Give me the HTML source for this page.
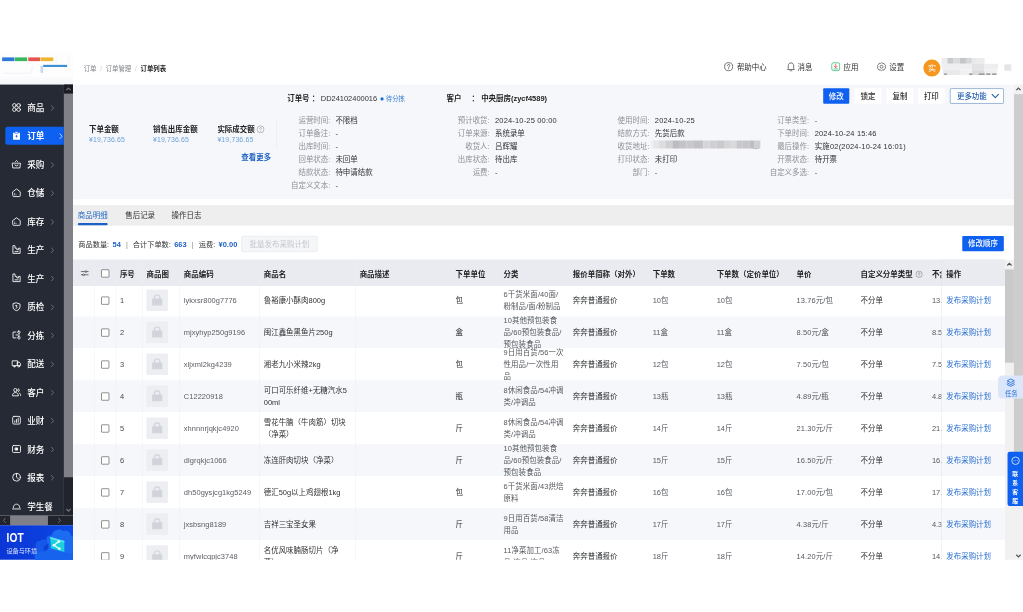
<!DOCTYPE html>
<html lang="zh-CN"><head><meta charset="utf-8"><title>订单列表</title>
<style>
*{box-sizing:border-box;margin:0;padding:0}
html,body{width:1023px;height:612px;background:#fff;overflow:hidden}
body{font-family:"Liberation Sans","Noto Sans CJK SC",sans-serif;color:#303133;position:relative}
#stage{position:absolute;left:0;top:51px;width:1920px;height:955px;transform:scale(0.5328125);transform-origin:0 0;overflow:hidden;background:#fff;font-size:14px;filter:blur(.5px)}
.abs{position:absolute}
/* header */
#hdr{position:absolute;left:0;top:0;width:1920px;height:63px;background:#fff}
#logo{position:absolute;left:0;top:0;width:137px;height:63px;background:#fff;overflow:hidden}
.bc{position:absolute;left:157px;top:22px;font-size:12px;line-height:22px;color:#7e8188;white-space:nowrap}
.bc b{color:#222;font-weight:700}
.bc i{font-style:normal;color:#c8cacf;margin:0 7px}
.hi{position:absolute;top:19px;height:24px;line-height:24px;font-size:14px;color:#303133;white-space:nowrap}
.hi svg{position:absolute;left:-25px;top:1px;width:19px;height:19px}
/* sidebar */
#side{position:absolute;left:0;top:63px;width:120px;height:809px;background:#262a35;overflow:hidden}
.mi{position:absolute;left:0;width:120px;height:34px;line-height:37px;color:#fff;font-size:16px;font-weight:500}
.mi .tx{position:absolute;left:51px;top:0;letter-spacing:0}
.mi svg.ic{position:absolute;left:21px;top:7px}
.mi .ch{position:absolute;left:95px;top:12px}
.mi.act{background:#0e60f0;left:10px;width:110px;border-radius:4px 0 0 4px;font-weight:700}
.mi.act .tx{left:41px}
.mi.act svg.ic{left:11px}
.mi.act .ch{left:101px}
#vsb{position:absolute;left:120px;top:63px;width:17px;height:809px;background:#21242d}
#vsb .th{position:absolute;left:0;top:17px;width:17px;height:720px;background:#7f8088}
#hsb{position:absolute;left:0;top:872px;width:137px;height:18px;background:#21242d}
#hsb .th{position:absolute;left:19px;top:0;width:71px;height:18px;background:#7f8088}
#iot{position:absolute;left:0;top:890px;width:137px;height:67px;background:linear-gradient(90deg,#0a36d6 0%,#0b3fdd 55%,#0d4ae6 100%);overflow:hidden;color:#fff}
/* main */
#panel{position:absolute;left:137px;top:63px;width:1766px;height:215px;background:#f6f7fb}
.lab{position:absolute;width:140px;text-align:right;font-size:14px;line-height:24px;color:#8c9097;white-space:nowrap}
.val{position:absolute;font-size:14px;line-height:24px;color:#303133;white-space:nowrap}
.amt-t{position:absolute;top:167px;font-size:14px;font-weight:700;line-height:22px;color:#222;white-space:nowrap}
.amt-v{position:absolute;top:187px;font-size:13px;line-height:20px;color:#6ba4da;white-space:nowrap;letter-spacing:.25px}
.btn{position:absolute;top:70px;height:29px;line-height:31px;font-size:14px;font-weight:500;text-align:center;background:#fff;color:#303133;white-space:nowrap;border-radius:2px}
#tabs{position:absolute;left:137px;top:289px;width:1766px;height:39px;background:#eeeeee}
.tab{position:absolute;top:0;height:39px;line-height:40px;font-size:14px;color:#303133;white-space:nowrap}
.tab.on{color:#2267c6}
.tab.on:after{content:"";position:absolute;left:0;right:0;bottom:1px;height:4px;background:#1b60c2;border-radius:2px}
#tool{position:absolute;left:147px;top:352px;font-size:13.5px;line-height:22px;color:#303133;white-space:nowrap}
#tool b{color:#1b60c2;font-weight:700;font-size:14px;margin-left:2.5px;letter-spacing:.1px}
#tool i{font-style:normal;color:#888;margin:0 9.5px}
/* table */
#tbl{position:absolute;left:137px;top:391px;width:1749px;height:566px;overflow:hidden;background:#fff}
.th{position:absolute;left:0;top:0;width:1749px;height:50px;background:#e9ebf1;z-index:3;padding-top:3px}
.tr{position:absolute;left:0;width:1749px;height:60px;background:#fff}
.tr.g{background:#f6f7fa}
.c{position:absolute;top:0;height:100%;font-size:14px;color:#45484e;display:flex;align-items:center;line-height:22px;padding:0 8px;overflow:hidden}
.th .c{font-weight:700;color:#222;font-size:14px;padding-top:5px}
.vl{position:absolute;top:0;width:1px;height:566px;background:#eceef2;z-index:4;opacity:.9}
.cb{position:absolute;width:14.5px;height:14.5px;border:1.9px solid #333;border-radius:1.5px;background:#fff;margin:1px}
.img{position:absolute;left:138px;top:10px;width:40px;height:40px;background:#eceef2}
.lk{color:#2a6fd0}
#fix{position:absolute;left:1630px;top:0;width:119px;height:566px;border-left:1px solid #e4e6ea;z-index:5}

.en{letter-spacing:.35px}
</style></head>
<body>
<div id="stage">

<div id="hdr">
 <div class="bc">订单<i>/</i>订单管理<i>/</i><b>订单列表</b></div>
 <div class="hi" style="left:1383px"><svg class="" style="" width="18" height="18" viewBox="0 0 18 18" fill="none"><circle cx="9" cy="9" r="7.200" stroke="#444" stroke-width="1.300"/><path d="M6.800 7.200c0-3 4.400-3 4.400-.2 0 1.600-2.200 1.700-2.200 3.400" stroke="#444" stroke-width="1.300" stroke-linecap="round"/><circle cx="9" cy="12.800" r=".900" fill="#444"/></svg>帮助中心</div>
 <div class="hi" style="left:1497px"><svg class="" style="left:-22px" width="18" height="18" viewBox="0 0 18 18" fill="none"><path d="M4.200 12.500V7.500c0-3.200 2-5.300 4.800-5.300s4.800 2.100 4.800 5.300v5l1.300 1.500H2.900z" stroke="#444" stroke-width="1.300" stroke-linejoin="round"/><path d="M7.300 16.300h3.400" stroke="#444" stroke-width="1.300" stroke-linecap="round"/></svg>消息</div>
 <div class="hi" style="left:1583px"><svg class="" style="left:-24px" width="18" height="18" viewBox="0 0 18 18" fill="none"><rect x="2" y="2" width="14" height="14" rx="3" stroke="#2bb673" stroke-width="1.300"/><path d="M9 4.500v6M6.500 8.300L9 10.800l2.500-2.500" stroke="#e4573d" stroke-width="1.400" stroke-linecap="round" stroke-linejoin="round"/><path d="M5.500 13h7" stroke="#2bb673" stroke-width="1.300" stroke-linecap="round"/></svg>应用</div>
 <div class="hi" style="left:1669px"><svg class="" style="left:-24px" width="18" height="18" viewBox="0 0 18 18" fill="none"><path d="M9 1.800l2 1.400 2.400-.2.900 2.200 2 1.400-.7 2.400.7 2.400-2 1.400-.900 2.200-2.400-.2-2 1.400-2-1.400-2.400.2-.900-2.200-2-1.400.7-2.400-.7-2.400 2-1.400.900-2.200 2.400.2z" stroke="#444" stroke-width="1.200" stroke-linejoin="round"/><circle cx="9" cy="9" r="2.600" stroke="#444" stroke-width="1.200"/></svg>设置</div>
 <div class="abs" style="left:1733px;top:16px;width:32px;height:32px;border-radius:50%;background:#f5961e;color:#fff;font-size:15px;line-height:32px;text-align:center">实</div>
<div class="abs" style="left:0;top:0;filter:blur(1.200px)"><div class="abs" style="left:1767.3px;top:13.2px;width:10.4px;height:10.8px;background:#ececee"></div><div class="abs" style="left:1777.7px;top:13.2px;width:11.3px;height:10.8px;background:#c9cace"></div><div class="abs" style="left:1789.1px;top:13.2px;width:12.3px;height:10.8px;background:#dadbde"></div><div class="abs" style="left:1801.3px;top:13.2px;width:11.3px;height:10.8px;background:#c5c6ca"></div><div class="abs" style="left:1812.7px;top:13.2px;width:11.3px;height:10.8px;background:#d5d6d9"></div><div class="abs" style="left:1824.0px;top:13.2px;width:11.3px;height:10.8px;background:#e9e9eb"></div><div class="abs" style="left:1835.4px;top:13.2px;width:12.3px;height:10.8px;background:#ececee"></div><div class="abs" style="left:1767.3px;top:24.0px;width:56.7px;height:11.0px;background:#efeff1"></div><div class="abs" style="left:1824.0px;top:24.0px;width:23.6px;height:11.0px;background:#e3e3e6"></div><div class="abs" style="left:1847.7px;top:24.0px;width:25.5px;height:11.0px;background:#eeeef0"></div><div class="abs" style="left:1770.2px;top:35.0px;width:32.1px;height:10.4px;background:#e9e9eb"></div><div class="abs" style="left:1802.3px;top:35.0px;width:21.7px;height:10.4px;background:#f1f1f2"></div><div class="abs" style="left:1824.0px;top:35.0px;width:23.6px;height:10.4px;background:#dddde0"></div><div class="abs" style="left:1847.7px;top:35.0px;width:24.6px;height:10.4px;background:#f0f0f1"></div><div class="abs" style="left:1771.7px;top:42.4px;width:5.7px;height:2.5px;background:#9a9a9e"></div><div class="abs" style="left:1818.9px;top:42.4px;width:6.0px;height:2.5px;background:#9a9a9e"></div><div class="abs" style="left:1837.3px;top:42.4px;width:10.4px;height:2.5px;background:#9a9a9e"></div><div class="abs" style="left:1850.5px;top:42.4px;width:8.5px;height:2.5px;background:#9a9a9e"></div><div class="abs" style="left:1861.8px;top:42.4px;width:8.5px;height:2.5px;background:#9a9a9e"></div><div class="abs" style="left:1884.5px;top:24.6px;width:13.2px;height:12.3px;background:#e5e5e7"></div></div>
</div>
<div id="logo">
  <div class="abs" style="left:0;top:0;width:137px;height:46px;background:#fdfdfe"></div>
  <div class="abs" style="left:4px;top:11.500px;width:22.500px;height:7px;background:#2f78d8"></div>
  <div class="abs" style="left:28px;top:11.500px;width:22.500px;height:7px;background:#38b85c"></div>
  <div class="abs" style="left:52.500px;top:11.500px;width:22.500px;height:7px;background:#e5554e"></div>
  <div class="abs" style="left:75.500px;top:11.500px;width:24px;height:7px;background:#f0b530"></div>
  <div class="abs" style="left:80.500px;top:26px;width:45px;height:3.500px;background:#3d8fd1"></div>
  <div class="abs" style="left:76px;top:28px;width:5px;height:13px;background:#c4d8ee"></div>
  <div class="abs" style="left:6px;top:41px;width:51px;height:1px;background:#e3e6ea"></div>
  <div class="abs" style="left:58.500px;top:27px;width:1px;height:15px;background:#e9ebee;transform:rotate(14deg)"></div>
  <div class="abs" style="left:105px;top:9px;width:1px;height:12px;background:#eceef1"></div>
  <div class="abs" style="left:129px;top:8px;width:1px;height:22px;background:#eceef1"></div>
  <div class="abs" style="left:0;top:46px;width:137px;height:17px;background:linear-gradient(#fdfdfe,#f3f5f8)"></div>
</div>

<div id="side"><div class="mi" style="top:25.9px"><svg class="ic" style="" width="20" height="20" viewBox="0 0 20 20" fill="none"><g stroke="#fff" stroke-width="1.6" stroke-linecap="round" stroke-linejoin="round"><circle cx="6" cy="6" r="3.4"/><circle cx="14" cy="6" r="3.4"/><circle cx="6" cy="14" r="3.4"/><circle cx="14" cy="14" r="3.4"/></g></svg><span class="tx">商品</span><svg class="ch" style="" width="7" height="12" viewBox="0 0 7 12" fill="none"><path d="M1.500 1.500l4 4.500-4 4.500" stroke="#7f838d" stroke-width="1.400" stroke-linecap="round" stroke-linejoin="round"/></svg></div><div class="mi act" style="top:79.3px"><svg class="ic" style="" width="20" height="20" viewBox="0 0 20 20" fill="none"><path d="M3.5 4.5h13v13h-13z" fill="#fff"/><path d="M7 2.5h6v3.2H7z" fill="#fff" stroke="#0e60f0" stroke-width="1"/><path d="M10 8.5v5M8 11h4" stroke="#0e60f0" stroke-width="1.5"/></svg><span class="tx">订单</span><svg class="ch" style="" width="7" height="12" viewBox="0 0 7 12" fill="none"><path d="M1.500 1.500l4 4.500-4 4.500" stroke="#fff" stroke-width="1.400" stroke-linecap="round" stroke-linejoin="round"/></svg></div><div class="mi" style="top:132.7px"><svg class="ic" style="" width="20" height="20" viewBox="0 0 20 20" fill="none"><g stroke="#fff" stroke-width="1.6" stroke-linecap="round" stroke-linejoin="round"><path d="M2.5 7.5h15l-1.2 9H3.7z"/><path d="M7 10.5c0 3 6 3 6 0"/><path d="M8 4.5l2-2 2 2"/></g></svg><span class="tx">采购</span><svg class="ch" style="" width="7" height="12" viewBox="0 0 7 12" fill="none"><path d="M1.500 1.500l4 4.500-4 4.500" stroke="#7f838d" stroke-width="1.400" stroke-linecap="round" stroke-linejoin="round"/></svg></div><div class="mi" style="top:186.1px"><svg class="ic" style="" width="20" height="20" viewBox="0 0 20 20" fill="none"><g stroke="#fff" stroke-width="1.6" stroke-linecap="round" stroke-linejoin="round"><path d="M3 8.2L10 3l7 5.2V16a1.2 1.2 0 0 1-1.2 1.2H4.2A1.2 1.2 0 0 1 3 16z"/><path d="M6.5 13.8h.1M9 13.8h.1M6.5 11.2h.1"/></g></svg><span class="tx">仓储</span><svg class="ch" style="" width="7" height="12" viewBox="0 0 7 12" fill="none"><path d="M1.500 1.500l4 4.500-4 4.500" stroke="#7f838d" stroke-width="1.400" stroke-linecap="round" stroke-linejoin="round"/></svg></div><div class="mi" style="top:239.5px"><svg class="ic" style="" width="20" height="20" viewBox="0 0 20 20" fill="none"><g stroke="#fff" stroke-width="1.6" stroke-linecap="round" stroke-linejoin="round"><path d="M3 8.2L10 3l7 5.2V16a1.2 1.2 0 0 1-1.2 1.2H4.2A1.2 1.2 0 0 1 3 16z"/><path d="M6.5 13.8h.1M9 13.8h.1M6.5 11.2h.1"/></g></svg><span class="tx">库存</span><svg class="ch" style="" width="7" height="12" viewBox="0 0 7 12" fill="none"><path d="M1.500 1.500l4 4.500-4 4.500" stroke="#7f838d" stroke-width="1.400" stroke-linecap="round" stroke-linejoin="round"/></svg></div><div class="mi" style="top:292.9px"><svg class="ic" style="" width="20" height="20" viewBox="0 0 20 20" fill="none"><g stroke="#fff" stroke-width="1.6" stroke-linecap="round" stroke-linejoin="round"><path d="M3.200 3.200v13.600h13.600V7h-3v3h-3.200V7h-3.400V3.200z"/><path d="M7 13.500h6"/></g></svg><span class="tx">生产</span><svg class="ch" style="" width="7" height="12" viewBox="0 0 7 12" fill="none"><path d="M1.500 1.500l4 4.500-4 4.500" stroke="#7f838d" stroke-width="1.400" stroke-linecap="round" stroke-linejoin="round"/></svg></div><div class="mi" style="top:346.3px"><svg class="ic" style="" width="20" height="20" viewBox="0 0 20 20" fill="none"><g stroke="#fff" stroke-width="1.6" stroke-linecap="round" stroke-linejoin="round"><path d="M3.200 3.200v13.600h13.600V7h-3v3h-3.200V7h-3.400V3.200z"/><path d="M7 13.500h6"/></g></svg><span class="tx">生产</span><svg class="ch" style="" width="7" height="12" viewBox="0 0 7 12" fill="none"><path d="M1.500 1.500l4 4.500-4 4.500" stroke="#7f838d" stroke-width="1.400" stroke-linecap="round" stroke-linejoin="round"/></svg></div><div class="mi" style="top:399.7px"><svg class="ic" style="" width="20" height="20" viewBox="0 0 20 20" fill="none"><g stroke="#fff" stroke-width="1.6" stroke-linecap="round" stroke-linejoin="round"><path d="M10 2.8l6.5 2v5.4c0 3.6-2.6 6-6.5 7.2-3.900-1.2-6.500-3.600-6.500-7.200V4.800z"/><path d="M8.400 7.500h2.400l-1.400 2.200c2.400 0 2.400 3-.2 3"/></g></svg><span class="tx">质检</span><svg class="ch" style="" width="7" height="12" viewBox="0 0 7 12" fill="none"><path d="M1.500 1.500l4 4.500-4 4.500" stroke="#7f838d" stroke-width="1.400" stroke-linecap="round" stroke-linejoin="round"/></svg></div><div class="mi" style="top:453.1px"><svg class="ic" style="" width="20" height="20" viewBox="0 0 20 20" fill="none"><g stroke="#fff" stroke-width="1.6" stroke-linecap="round" stroke-linejoin="round"><path d="M9 4.500H3.500v11H9"/><path d="M9 10h3"/><rect x="12.500" y="2.800" width="4" height="4" rx="1"/><rect x="12.500" y="13.200" width="4" height="4" rx="1"/><path d="M14.500 8.500v3"/></g></svg><span class="tx">分拣</span><svg class="ch" style="" width="7" height="12" viewBox="0 0 7 12" fill="none"><path d="M1.500 1.500l4 4.500-4 4.500" stroke="#7f838d" stroke-width="1.400" stroke-linecap="round" stroke-linejoin="round"/></svg></div><div class="mi" style="top:506.5px"><svg class="ic" style="" width="20" height="20" viewBox="0 0 20 20" fill="none"><g stroke="#fff" stroke-width="1.6" stroke-linecap="round" stroke-linejoin="round"><path d="M2.500 4.500h9.500v9h-9.500z"/><path d="M12 7h3.200l2.300 2.800v3.700H12z"/><circle cx="6" cy="15" r="1.300" fill="#262a35"/><circle cx="14.300" cy="15" r="1.300" fill="#262a35"/></g></svg><span class="tx">配送</span><svg class="ch" style="" width="7" height="12" viewBox="0 0 7 12" fill="none"><path d="M1.500 1.500l4 4.500-4 4.500" stroke="#7f838d" stroke-width="1.400" stroke-linecap="round" stroke-linejoin="round"/></svg></div><div class="mi" style="top:559.9px"><svg class="ic" style="" width="20" height="20" viewBox="0 0 20 20" fill="none"><g stroke="#fff" stroke-width="1.6" stroke-linecap="round" stroke-linejoin="round"><circle cx="8" cy="6.500" r="3.200"/><path d="M2.500 16.500c0-3.600 2.400-5.400 5.500-5.400s5.500 1.800 5.500 5.400z"/><path d="M13.500 4c2.600.400 2.600 4.600 0 5.200M15 11.800c1.800.700 2.700 2.300 2.700 4.700"/></g></svg><span class="tx">客户</span><svg class="ch" style="" width="7" height="12" viewBox="0 0 7 12" fill="none"><path d="M1.500 1.500l4 4.500-4 4.500" stroke="#7f838d" stroke-width="1.400" stroke-linecap="round" stroke-linejoin="round"/></svg></div><div class="mi" style="top:613.3px"><svg class="ic" style="" width="20" height="20" viewBox="0 0 20 20" fill="none"><g stroke="#fff" stroke-width="1.6" stroke-linecap="round" stroke-linejoin="round"><rect x="2.800" y="2.800" width="14.400" height="14.400" rx="2.400"/><path d="M6.800 14v-3M10 14V8.500M13.200 14V6"/></g></svg><span class="tx">业财</span><svg class="ch" style="" width="7" height="12" viewBox="0 0 7 12" fill="none"><path d="M1.500 1.500l4 4.500-4 4.500" stroke="#7f838d" stroke-width="1.400" stroke-linecap="round" stroke-linejoin="round"/></svg></div><div class="mi" style="top:666.7px"><svg class="ic" style="" width="20" height="20" viewBox="0 0 20 20" fill="none"><g stroke="#fff" stroke-width="1.6" stroke-linecap="round" stroke-linejoin="round"><rect x="2.500" y="3.500" width="15" height="13" rx="1.800"/><rect x="8" y="8" width="4" height="4" fill="#fff"/></g></svg><span class="tx">财务</span><svg class="ch" style="" width="7" height="12" viewBox="0 0 7 12" fill="none"><path d="M1.500 1.500l4 4.500-4 4.500" stroke="#7f838d" stroke-width="1.400" stroke-linecap="round" stroke-linejoin="round"/></svg></div><div class="mi" style="top:720.1px"><svg class="ic" style="" width="20" height="20" viewBox="0 0 20 20" fill="none"><g stroke="#fff" stroke-width="1.6" stroke-linecap="round" stroke-linejoin="round"><circle cx="10" cy="10" r="7.200"/><path d="M10 2.800V10l4.600 4"/></g></svg><span class="tx">报表</span><svg class="ch" style="" width="7" height="12" viewBox="0 0 7 12" fill="none"><path d="M1.500 1.500l4 4.500-4 4.500" stroke="#7f838d" stroke-width="1.400" stroke-linecap="round" stroke-linejoin="round"/></svg></div><div class="mi" style="top:773.5px"><svg class="ic" style="" width="20" height="20" viewBox="0 0 20 20" fill="none"><g stroke="#fff" stroke-width="1.6" stroke-linecap="round" stroke-linejoin="round" stroke-width="2"><path d="M2.500 15.500h15"/><path d="M4 13c0-4 2.700-6.500 6-6.500s6 2.500 6 6.500"/></g></svg><span class="tx">学生餐</span></div></div>

<div id="vsb"><div class="abs" style="left:0;top:0;width:17px;height:17px;background:#1a1c22"><svg class="" style="" width="17" height="17" viewBox="0 0 17 17" fill="none"><path d="M4.500 10.500l4-4 4 4" stroke="#70727a" stroke-width="2.400" fill="none"/></svg></div><div class="th"></div><div class="abs" style="left:0;top:790px"><svg class="" style="" width="17" height="17" viewBox="0 0 17 17" fill="none"><path d="M4.500 6.500l4 4 4-4" stroke="#70727a" stroke-width="2.400" fill="none"/></svg></div></div>
<div id="hsb"><div class="th"></div>
 <svg class="abs" style="left:0;top:0" width="17" height="18" viewBox="0 0 17 18" fill="none"><path d="M10.500 4.500l-4 4.500 4 4.500" stroke="#70727a" stroke-width="1.800" fill="none"/></svg>
 <svg class="abs" style="left:103px;top:0" width="17" height="18" viewBox="0 0 17 18" fill="none"><path d="M6.500 4.500l4 4.500-4 4.500" stroke="#70727a" stroke-width="1.800" fill="none"/></svg>
</div>


<div id="iot">
 <svg class="abs" style="left:57px;top:0" width="80" height="67" viewBox="0 0 80 67" fill="none"><path d="M31 67V31c-3-8 3-13 9-11 1-10 14-16 22-9 6-3 13 1 14 8 4 1 6 5 4 9v39z" fill="#1c6cf2"/><path d="M10 67V36c0-4 4-7 8-6 3-4 10-4 12 0 2 1 3 3 3 6v31z" fill="#1659e9"/><path d="M25 40l9-6v10l-9 6z" fill="#0c41d6"/><path d="M8 52l30-6 42 8v13H8z" fill="#1763ee"/><path d="M37.300 22.200l26.400 7.400v20.800l-25.100-7.300z" fill="#1bd2dc"/><path d="M37.300 22.200l26.400 7.400v3l-26.400-7.400z" fill="#5fe6ea"/><path d="M53.300 30.800l-9.200 6.700 10.400 6.800" stroke="#effffe" stroke-width="2.400" fill="none" stroke-linejoin="round"/><circle cx="53.300" cy="30.800" r="2.400" fill="#effffe"/><circle cx="44.100" cy="37.500" r="2.400" fill="#effffe"/><circle cx="54.500" cy="44.300" r="2.400" fill="#effffe"/></svg>
 <div class="abs" style="left:12px;top:9px;font-size:23px;font-weight:700;line-height:30px;letter-spacing:.5px;transform:scaleX(.83);transform-origin:0 0">IOT</div>
 <div class="abs" style="left:12px;top:41px;font-size:11.500px;line-height:16px;color:#dfe8ff;white-space:nowrap">设备与环境</div>
</div>


<div id="panel"></div>
<div class="amt-t" style="left:167px;top:136px">下单金额</div><div class="amt-v" style="left:167px;top:156px">¥19,736.65</div>
<div class="amt-t" style="left:287px;top:136px">销售出库金额</div><div class="amt-v" style="left:287px;top:156px">¥19,736.65</div>
<div class="amt-t" style="left:408px;top:136px">实际成交额</div><div class="amt-v" style="left:408px;top:156px">¥19,736.65</div>
<svg class="abs" style="left:481px;top:139px" width="16" height="16" viewBox="0 0 16 16" fill="none"><circle cx="8" cy="8" r="6.500" stroke="#8c9097" stroke-width="1.100"/><path d="M6.200 6.500c0-2.500 3.600-2.500 3.600-.1 0 1.300-1.800 1.400-1.800 2.800" stroke="#8c9097" stroke-width="1.100" stroke-linecap="round"/><circle cx="8" cy="11.400" r=".750" fill="#8c9097"/></svg>
<div class="abs" style="left:453px;top:188.500px;font-size:14px;font-weight:700;line-height:22px;color:#1b60c2;white-space:nowrap">查看更多</div>
<div class="abs" style="left:518px;top:128px;width:1px;height:55px;background:#e3e6eb"></div>
<div class="abs" style="left:539px;top:78px;font-size:14px;font-weight:700;line-height:22px;color:#222;white-space:nowrap">订单号</div>
<div class="abs" style="left:585px;top:78px;font-size:14px;font-weight:700;line-height:22px;color:#222">：</div>
<div class="abs" style="left:602px;top:78px;font-size:14px;line-height:22px;color:#303133;white-space:nowrap">DD24102400016</div>
<div class="abs" style="left:714px;top:87px;width:6px;height:6px;border-radius:50%;background:#1a6bd6"></div>
<div class="abs" style="left:724px;top:78px;font-size:12px;line-height:22px;color:#3f83d6;white-space:nowrap">待分拣</div>
<div class="abs" style="left:838px;top:78px;font-size:14px;font-weight:700;line-height:22px;color:#222;white-space:nowrap">客户</div>
<div class="abs" style="left:885px;top:78px;font-size:14px;font-weight:700;line-height:22px;color:#222">：</div>
<div class="abs" style="left:903px;top:78px;font-size:14px;font-weight:700;line-height:22px;color:#222;white-space:nowrap">中央厨房(zycf4589)</div>
<div class="lab" style="left:480.0px;top:118.0px">运营时间:</div><div class="val" style="left:629.5px;top:118.0px">不限档</div><div class="lab" style="left:480.0px;top:142.2px">订单备注:</div><div class="val" style="left:629.5px;top:142.2px">-</div><div class="lab" style="left:480.0px;top:166.3px">出库时间:</div><div class="val" style="left:629.5px;top:166.3px">-</div><div class="lab" style="left:480.0px;top:191.6px">回单状态:</div><div class="val" style="left:629.5px;top:191.6px">未回单</div><div class="lab" style="left:480.0px;top:214.8px">结款状态:</div><div class="val" style="left:629.5px;top:214.8px">待申请结款</div><div class="lab" style="left:480.0px;top:239.6px">自定义文本:</div><div class="val" style="left:629.5px;top:239.6px">-</div><div class="lab" style="left:779.0px;top:118.0px">预计收货:</div><div class="val en" style="left:929.0px;top:118.0px">2024-10-25 00:00</div><div class="lab" style="left:779.0px;top:142.2px">订单来源:</div><div class="val" style="left:929.0px;top:142.2px">系统录单</div><div class="lab" style="left:779.0px;top:166.3px">收货人:</div><div class="val" style="left:929.0px;top:166.3px">吕辉耀</div><div class="lab" style="left:779.0px;top:191.6px">出库状态:</div><div class="val" style="left:929.0px;top:191.6px">待出库</div><div class="lab" style="left:779.0px;top:214.8px">运费:</div><div class="val" style="left:929.0px;top:214.8px">-</div><div class="lab" style="left:1079.0px;top:118.0px">使用时间:</div><div class="val en" style="left:1229.0px;top:118.0px">2024-10-25</div><div class="lab" style="left:1079.0px;top:142.2px">结款方式:</div><div class="val" style="left:1229.0px;top:142.2px">先货后款</div><div class="lab" style="left:1079.0px;top:166.3px">收货地址:</div><div class="val" style="left:1229.0px;top:166.3px"></div><div class="lab" style="left:1079.0px;top:191.6px">打印状态:</div><div class="val" style="left:1229.0px;top:191.6px">未打印</div><div class="lab" style="left:1079.0px;top:214.8px">部门:</div><div class="val" style="left:1229.0px;top:214.8px">-</div><div class="lab" style="left:1378.5px;top:118.0px">订单类型:</div><div class="val" style="left:1529.0px;top:118.0px">-</div><div class="lab" style="left:1378.5px;top:142.2px">下单时间:</div><div class="val en" style="left:1529.0px;top:142.2px">2024-10-24 15:46</div><div class="lab" style="left:1378.5px;top:166.3px">最后操作:</div><div class="val en" style="left:1529.0px;top:166.3px">实施02(2024-10-24 16:01)</div><div class="lab" style="left:1378.5px;top:191.6px">开票状态:</div><div class="val" style="left:1529.0px;top:191.6px">待开票</div><div class="lab" style="left:1378.5px;top:214.8px">自定义多选:</div><div class="val" style="left:1529.0px;top:214.8px">-</div>
<div class="abs" style="left:0;top:0;filter:blur(1.200px)"><div class="abs" style="left:1220.9px;top:168.1px;width:5.5px;height:14.9px;background:#eff0f2"></div><div class="abs" style="left:1226.4px;top:168.1px;width:11.0px;height:14.9px;background:#e6e6e8"></div><div class="abs" style="left:1237.4px;top:168.1px;width:12.4px;height:14.9px;background:#dcdcde"></div><div class="abs" style="left:1249.8px;top:168.1px;width:12.4px;height:14.9px;background:#d0d0d3"></div><div class="abs" style="left:1262.2px;top:168.1px;width:13.8px;height:14.9px;background:#bcbcc0"></div><div class="abs" style="left:1276.0px;top:168.1px;width:12.4px;height:14.9px;background:#c4c4c7"></div><div class="abs" style="left:1288.4px;top:168.1px;width:12.4px;height:14.9px;background:#c9c9cc"></div><div class="abs" style="left:1300.7px;top:168.1px;width:19.3px;height:14.9px;background:#c2c2c6"></div><div class="abs" style="left:1320.0px;top:168.1px;width:12.4px;height:14.9px;background:#d6d6d9"></div><div class="abs" style="left:1332.4px;top:168.1px;width:12.4px;height:14.9px;background:#d0d0d3"></div><div class="abs" style="left:1344.8px;top:168.1px;width:13.8px;height:14.9px;background:#cacacd"></div><div class="abs" style="left:1358.5px;top:168.1px;width:11.0px;height:14.9px;background:#d4d4d7"></div><div class="abs" style="left:1369.5px;top:168.1px;width:12.4px;height:14.9px;background:#d9d9dc"></div><div class="abs" style="left:1381.9px;top:168.1px;width:12.4px;height:14.9px;background:#c8c8cb"></div><div class="abs" style="left:1394.3px;top:168.1px;width:12.4px;height:14.9px;background:#c6c6c9"></div><div class="abs" style="left:1406.7px;top:168.1px;width:9.6px;height:14.9px;background:#bdbdc1"></div><div class="abs" style="left:1416.3px;top:168.1px;width:11.0px;height:14.9px;background:#cfcfd2"></div><div class="abs" style="left:1413.0px;top:182.7px;width:10.5px;height:1.7px;background:#a0a0a4"></div></div>
<div class="btn" style="left:1545px;width:49px;background:#0e60f0;color:#fff">修改</div>
<div class="btn" style="left:1604px;width:50px">锁定</div>
<div class="btn" style="left:1664px;width:50px">复制</div>
<div class="btn" style="left:1723px;width:50px">打印</div>
<div class="btn" style="left:1783px;width:101px;border:1.500px solid #4a7fb8;color:#2461ae;line-height:28px;text-align:left;padding-left:12px;font-size:14px">更多功能<svg class="abs" style="left:76px;top:8px" width="16" height="12" viewBox="0 0 16 12" fill="none"><path d="M2 2.500l6 6 6-6" stroke="#1f5fae" stroke-width="2" stroke-linecap="round" stroke-linejoin="round"/></svg></div>


<div id="tabs">
 <div class="tab on" style="left:9px">商品明细</div>
 <div class="tab" style="left:98px">售后记录</div>
 <div class="tab" style="left:185px">操作日志</div>
</div>
<div id="tool">商品数量: <b>54</b><i>|</i>合计下单数: <b>663</b><i>|</i>运费: <b>¥0.00</b></div>
<div class="abs" style="left:453px;top:347px;width:143px;height:30px;line-height:28px;border:1px solid #e1e4ea;border-radius:3px;background:#f5f6f8;color:#c3c6cd;font-size:14px;text-align:center;white-space:nowrap">批量发布采购计划</div>
<div class="abs" style="left:1806px;top:347px;width:78px;height:29px;line-height:29px;border-radius:2px;background:#0e60f0;color:#fff;font-size:14px;font-weight:500;text-align:center;white-space:nowrap">修改顺序</div>

<div id="tbl"><div class="th"><svg class="abs" style="left:14px;top:18px" width="16" height="16" viewBox="0 0 16 16" fill="none"><path d="M1.500 5h7M12 5h2.500M1.500 11h2.500M7.500 11h7" stroke="#444" stroke-width="1.400" stroke-linecap="round"/><circle cx="10.200" cy="5" r="1.700" stroke="#444" stroke-width="1.200"/><circle cx="5.800" cy="11" r="1.700" stroke="#444" stroke-width="1.200"/></svg><div class="cb" style="left:52px;top:18px"></div><div class="c" style="left:80px;width:50px">序号</div><div class="c" style="left:130px;width:70px">商品图</div><div class="c" style="left:200px;width:150px">商品编码</div><div class="c" style="left:350px;width:180px">商品名</div><div class="c" style="left:530px;width:180px">商品描述</div><div class="c" style="left:710px;width:90px">下单单位</div><div class="c" style="left:800px;width:130px">分类</div><div class="c" style="left:930px;width:150px">报价单简称（对外）</div><div class="c" style="left:1080px;width:120px">下单数</div><div class="c" style="left:1200px;width:150px">下单数（定价单位）</div><div class="c" style="left:1350px;width:120px">单价</div><div class="c" style="left:1470px;width:134px">自定义分单类型<svg class="" style="margin-left:5px;flex:none" width="14" height="14" viewBox="0 0 14 14" fill="none"><circle cx="7" cy="7" r="5.900" stroke="#777b82" stroke-width="1.100"/><path d="M5.400 5.700c0-2.200 3.200-2.200 3.200-.1 0 1.200-1.600 1.200-1.600 2.500" stroke="#777b82" stroke-width="1.100" stroke-linecap="round"/><circle cx="7" cy="10" r=".750" fill="#777b82"/></svg></div><div class="c" style="left:1604px;width:120px">不含税</div></div><div class="tr" style="top:47px"><div class="cb" style="left:52px;top:22px"></div><div class="c" style="left:80px;width:50px;">1</div><svg class="img" style="" width="40" height="40" viewBox="0 0 40 40" fill="none"><rect width="40" height="40" fill="#eceef2"/><path d="M14.800 17.500v-2.300a5.200 5.200 0 0 1 10.400 0V17.500" stroke="#d1d4da" stroke-width="2.200"/><rect x="10.500" y="16.500" width="19" height="13" rx="1" fill="#d1d4da"/></svg><div class="c" style="left:200px;width:150px;color:#5a5d63;letter-spacing:.1px">lykxsr800g7776</div><div class="c" style="left:350px;width:180px;color:#303133">鲁裕康小酥肉800g</div><div class="c" style="left:710px;width:90px;color:#2b2d30">包</div><div class="c" style="left:800px;width:130px;color:#55585e;letter-spacing:.15px">6干货米面/40面/<br>粉制品/面/粉制品</div><div class="c" style="left:930px;width:150px;color:#2b2d30">奔奔普通报价</div><div class="c" style="left:1080px;width:120px;color:#55585e">10包</div><div class="c" style="left:1200px;width:150px;color:#55585e">10包</div><div class="c" style="left:1350px;width:120px;color:#55585e;letter-spacing:.2px">13.76元/包</div><div class="c" style="left:1470px;width:134px;color:#2b2d30">不分单</div><div class="c" style="left:1604px;width:120px;color:#55585e">13.</div></div><div class="tr g" style="top:107px"><div class="cb" style="left:52px;top:22px"></div><div class="c" style="left:80px;width:50px;">2</div><svg class="img" style="" width="40" height="40" viewBox="0 0 40 40" fill="none"><rect width="40" height="40" fill="#eceef2"/><path d="M14.800 17.500v-2.300a5.200 5.200 0 0 1 10.400 0V17.500" stroke="#d1d4da" stroke-width="2.200"/><rect x="10.500" y="16.500" width="19" height="13" rx="1" fill="#d1d4da"/></svg><div class="c" style="left:200px;width:150px;color:#5a5d63;letter-spacing:.1px">mjxyhyp250g9196</div><div class="c" style="left:350px;width:180px;color:#303133">闽江鑫鱼黑鱼片250g</div><div class="c" style="left:710px;width:90px;color:#2b2d30">盒</div><div class="c" style="left:800px;width:130px;color:#55585e;letter-spacing:.15px">10其他预包装食<br>品/60预包装食品/<br>预包装食品</div><div class="c" style="left:930px;width:150px;color:#2b2d30">奔奔普通报价</div><div class="c" style="left:1080px;width:120px;color:#55585e">11盒</div><div class="c" style="left:1200px;width:150px;color:#55585e">11盒</div><div class="c" style="left:1350px;width:120px;color:#55585e;letter-spacing:.2px">8.50元/盒</div><div class="c" style="left:1470px;width:134px;color:#2b2d30">不分单</div><div class="c" style="left:1604px;width:120px;color:#55585e">8.5</div></div><div class="tr" style="top:167px"><div class="cb" style="left:52px;top:22px"></div><div class="c" style="left:80px;width:50px;">3</div><svg class="img" style="" width="40" height="40" viewBox="0 0 40 40" fill="none"><rect width="40" height="40" fill="#eceef2"/><path d="M14.800 17.500v-2.300a5.200 5.200 0 0 1 10.400 0V17.500" stroke="#d1d4da" stroke-width="2.200"/><rect x="10.500" y="16.500" width="19" height="13" rx="1" fill="#d1d4da"/></svg><div class="c" style="left:200px;width:150px;color:#5a5d63;letter-spacing:.1px">xljxml2kg4239</div><div class="c" style="left:350px;width:180px;color:#303133">湘老九小米辣2kg</div><div class="c" style="left:710px;width:90px;color:#2b2d30">包</div><div class="c" style="left:800px;width:130px;color:#55585e;letter-spacing:.15px">9日用百货/56一次<br>性用品/一次性用<br>品</div><div class="c" style="left:930px;width:150px;color:#2b2d30">奔奔普通报价</div><div class="c" style="left:1080px;width:120px;color:#55585e">12包</div><div class="c" style="left:1200px;width:150px;color:#55585e">12包</div><div class="c" style="left:1350px;width:120px;color:#55585e;letter-spacing:.2px">7.50元/包</div><div class="c" style="left:1470px;width:134px;color:#2b2d30">不分单</div><div class="c" style="left:1604px;width:120px;color:#55585e">7.5</div></div><div class="tr g" style="top:227px"><div class="cb" style="left:52px;top:22px"></div><div class="c" style="left:80px;width:50px;">4</div><svg class="img" style="" width="40" height="40" viewBox="0 0 40 40" fill="none"><rect width="40" height="40" fill="#eceef2"/><path d="M14.800 17.500v-2.300a5.200 5.200 0 0 1 10.400 0V17.500" stroke="#d1d4da" stroke-width="2.200"/><rect x="10.500" y="16.500" width="19" height="13" rx="1" fill="#d1d4da"/></svg><div class="c" style="left:200px;width:150px;color:#5a5d63;letter-spacing:.1px">C12220918</div><div class="c" style="left:350px;width:180px;color:#303133">可口可乐纤维+无糖汽水5<br>00ml</div><div class="c" style="left:710px;width:90px;color:#2b2d30">瓶</div><div class="c" style="left:800px;width:130px;color:#55585e;letter-spacing:.15px">8休闲食品/54冲调<br>类/冲调品</div><div class="c" style="left:930px;width:150px;color:#2b2d30">奔奔普通报价</div><div class="c" style="left:1080px;width:120px;color:#55585e">13瓶</div><div class="c" style="left:1200px;width:150px;color:#55585e">13瓶</div><div class="c" style="left:1350px;width:120px;color:#55585e;letter-spacing:.2px">4.89元/瓶</div><div class="c" style="left:1470px;width:134px;color:#2b2d30">不分单</div><div class="c" style="left:1604px;width:120px;color:#55585e">4.8</div></div><div class="tr" style="top:287px"><div class="cb" style="left:52px;top:22px"></div><div class="c" style="left:80px;width:50px;">5</div><svg class="img" style="" width="40" height="40" viewBox="0 0 40 40" fill="none"><rect width="40" height="40" fill="#eceef2"/><path d="M14.800 17.500v-2.300a5.200 5.200 0 0 1 10.400 0V17.500" stroke="#d1d4da" stroke-width="2.200"/><rect x="10.500" y="16.500" width="19" height="13" rx="1" fill="#d1d4da"/></svg><div class="c" style="left:200px;width:150px;color:#5a5d63;letter-spacing:.1px">xhnnnrjqkjc4920</div><div class="c" style="left:350px;width:180px;color:#303133">雪花牛腩（牛肉筋）切块<br>（净菜）</div><div class="c" style="left:710px;width:90px;color:#2b2d30">斤</div><div class="c" style="left:800px;width:130px;color:#55585e;letter-spacing:.15px">8休闲食品/54冲调<br>类/冲调品</div><div class="c" style="left:930px;width:150px;color:#2b2d30">奔奔普通报价</div><div class="c" style="left:1080px;width:120px;color:#55585e">14斤</div><div class="c" style="left:1200px;width:150px;color:#55585e">14斤</div><div class="c" style="left:1350px;width:120px;color:#55585e;letter-spacing:.2px">21.30元/斤</div><div class="c" style="left:1470px;width:134px;color:#2b2d30">不分单</div><div class="c" style="left:1604px;width:120px;color:#55585e">21.</div></div><div class="tr g" style="top:347px"><div class="cb" style="left:52px;top:22px"></div><div class="c" style="left:80px;width:50px;">6</div><svg class="img" style="" width="40" height="40" viewBox="0 0 40 40" fill="none"><rect width="40" height="40" fill="#eceef2"/><path d="M14.800 17.500v-2.300a5.200 5.200 0 0 1 10.400 0V17.500" stroke="#d1d4da" stroke-width="2.200"/><rect x="10.500" y="16.500" width="19" height="13" rx="1" fill="#d1d4da"/></svg><div class="c" style="left:200px;width:150px;color:#5a5d63;letter-spacing:.1px">dlgrqkjc1066</div><div class="c" style="left:350px;width:180px;color:#303133">冻连肝肉切块（净菜）</div><div class="c" style="left:710px;width:90px;color:#2b2d30">斤</div><div class="c" style="left:800px;width:130px;color:#55585e;letter-spacing:.15px">10其他预包装食<br>品/60预包装食品/<br>预包装食品</div><div class="c" style="left:930px;width:150px;color:#2b2d30">奔奔普通报价</div><div class="c" style="left:1080px;width:120px;color:#55585e">15斤</div><div class="c" style="left:1200px;width:150px;color:#55585e">15斤</div><div class="c" style="left:1350px;width:120px;color:#55585e;letter-spacing:.2px">16.50元/斤</div><div class="c" style="left:1470px;width:134px;color:#2b2d30">不分单</div><div class="c" style="left:1604px;width:120px;color:#55585e">16.</div></div><div class="tr" style="top:407px"><div class="cb" style="left:52px;top:22px"></div><div class="c" style="left:80px;width:50px;">7</div><svg class="img" style="" width="40" height="40" viewBox="0 0 40 40" fill="none"><rect width="40" height="40" fill="#eceef2"/><path d="M14.800 17.500v-2.300a5.200 5.200 0 0 1 10.400 0V17.500" stroke="#d1d4da" stroke-width="2.200"/><rect x="10.500" y="16.500" width="19" height="13" rx="1" fill="#d1d4da"/></svg><div class="c" style="left:200px;width:150px;color:#5a5d63;letter-spacing:.1px">dh50gysjcg1kg5249</div><div class="c" style="left:350px;width:180px;color:#303133">德汇50g以上鸡翅根1kg</div><div class="c" style="left:710px;width:90px;color:#2b2d30">包</div><div class="c" style="left:800px;width:130px;color:#55585e;letter-spacing:.15px">6干货米面/43烘焙<br>原料</div><div class="c" style="left:930px;width:150px;color:#2b2d30">奔奔普通报价</div><div class="c" style="left:1080px;width:120px;color:#55585e">16包</div><div class="c" style="left:1200px;width:150px;color:#55585e">16包</div><div class="c" style="left:1350px;width:120px;color:#55585e;letter-spacing:.2px">17.00元/包</div><div class="c" style="left:1470px;width:134px;color:#2b2d30">不分单</div><div class="c" style="left:1604px;width:120px;color:#55585e">17.</div></div><div class="tr g" style="top:467px"><div class="cb" style="left:52px;top:22px"></div><div class="c" style="left:80px;width:50px;">8</div><svg class="img" style="" width="40" height="40" viewBox="0 0 40 40" fill="none"><rect width="40" height="40" fill="#eceef2"/><path d="M14.800 17.500v-2.300a5.200 5.200 0 0 1 10.400 0V17.500" stroke="#d1d4da" stroke-width="2.200"/><rect x="10.500" y="16.500" width="19" height="13" rx="1" fill="#d1d4da"/></svg><div class="c" style="left:200px;width:150px;color:#5a5d63;letter-spacing:.1px">jxsbsng8189</div><div class="c" style="left:350px;width:180px;color:#303133">吉祥三宝圣女果</div><div class="c" style="left:710px;width:90px;color:#2b2d30">斤</div><div class="c" style="left:800px;width:130px;color:#55585e;letter-spacing:.15px">9日用百货/58清洁<br>用品</div><div class="c" style="left:930px;width:150px;color:#2b2d30">奔奔普通报价</div><div class="c" style="left:1080px;width:120px;color:#55585e">17斤</div><div class="c" style="left:1200px;width:150px;color:#55585e">17斤</div><div class="c" style="left:1350px;width:120px;color:#55585e;letter-spacing:.2px">4.38元/斤</div><div class="c" style="left:1470px;width:134px;color:#2b2d30">不分单</div><div class="c" style="left:1604px;width:120px;color:#55585e">4.3</div></div><div class="tr" style="top:527px"><div class="cb" style="left:52px;top:22px"></div><div class="c" style="left:80px;width:50px;">9</div><svg class="img" style="" width="40" height="40" viewBox="0 0 40 40" fill="none"><rect width="40" height="40" fill="#eceef2"/><path d="M14.800 17.500v-2.300a5.200 5.200 0 0 1 10.400 0V17.500" stroke="#d1d4da" stroke-width="2.200"/><rect x="10.500" y="16.500" width="19" height="13" rx="1" fill="#d1d4da"/></svg><div class="c" style="left:200px;width:150px;color:#5a5d63;letter-spacing:.1px">myfwlcqpjc3748</div><div class="c" style="left:350px;width:180px;color:#303133">名优风味腩肠切片（净<br>菜）</div><div class="c" style="left:710px;width:90px;color:#2b2d30">斤</div><div class="c" style="left:800px;width:130px;color:#55585e;letter-spacing:.15px">11净菜加工/63冻<br>品/冻品/冻品</div><div class="c" style="left:930px;width:150px;color:#2b2d30">奔奔普通报价</div><div class="c" style="left:1080px;width:120px;color:#55585e">18斤</div><div class="c" style="left:1200px;width:150px;color:#55585e">18斤</div><div class="c" style="left:1350px;width:120px;color:#55585e;letter-spacing:.2px">14.20元/斤</div><div class="c" style="left:1470px;width:134px;color:#2b2d30">不分单</div><div class="c" style="left:1604px;width:120px;color:#55585e">14.</div></div><div class="vl" style="left:40px"></div><div class="vl" style="left:80px"></div><div class="vl" style="left:130px"></div><div class="vl" style="left:200px"></div><div class="vl" style="left:350px"></div><div class="vl" style="left:530px"></div><div id="fix"><div class="abs" style="left:0;top:0;width:119px;height:50px;background:#e9ebf1;z-index:3;padding-top:3px"><div class="c" style="left:0;width:119px;font-weight:700;color:#222;padding-top:5px">操作</div></div><div class="abs" style="left:0;top:47px;width:119px;height:60px;background:#fff"><div class="c lk" style="left:0;width:119px">发布采购计划</div></div><div class="abs" style="left:0;top:107px;width:119px;height:60px;background:#f6f7fa"><div class="c lk" style="left:0;width:119px">发布采购计划</div></div><div class="abs" style="left:0;top:167px;width:119px;height:60px;background:#fff"><div class="c lk" style="left:0;width:119px">发布采购计划</div></div><div class="abs" style="left:0;top:227px;width:119px;height:60px;background:#f6f7fa"><div class="c lk" style="left:0;width:119px">发布采购计划</div></div><div class="abs" style="left:0;top:287px;width:119px;height:60px;background:#fff"><div class="c lk" style="left:0;width:119px">发布采购计划</div></div><div class="abs" style="left:0;top:347px;width:119px;height:60px;background:#f6f7fa"><div class="c lk" style="left:0;width:119px">发布采购计划</div></div><div class="abs" style="left:0;top:407px;width:119px;height:60px;background:#fff"><div class="c lk" style="left:0;width:119px">发布采购计划</div></div><div class="abs" style="left:0;top:467px;width:119px;height:60px;background:#f6f7fa"><div class="c lk" style="left:0;width:119px">发布采购计划</div></div><div class="abs" style="left:0;top:527px;width:119px;height:60px;background:#fff"><div class="c lk" style="left:0;width:119px">发布采购计划</div></div></div></div>

<div class="abs" style="left:1886px;top:392px;width:17px;height:565px;background:#f1f1f1"><svg class="" style="" width="17" height="17" viewBox="0 0 17 17" fill="none"><path d="M4.500 10.500l4-4 4 4" stroke="#555" stroke-width="2.400" fill="none"/></svg><div class="abs" style="left:0;top:18px;width:17px;height:175px;background:#c9c9c9"></div></div>
<div class="abs" style="left:1903px;top:63px;width:17px;height:894px;background:#f1f1f1"><svg class="" style="" width="17" height="17" viewBox="0 0 17 17" fill="none"><path d="M4.500 10.500l4-4 4 4" stroke="#555" stroke-width="2.400" fill="none"/></svg><div class="abs" style="left:0;top:18px;width:17px;height:760px;background:#cdcdcd"></div><div class="abs" style="left:0;top:876px"><svg class="" style="" width="17" height="17" viewBox="0 0 17 17" fill="none"><path d="M4.500 6.500l4 4 4-4" stroke="#555" stroke-width="2.400" fill="none"/></svg></div></div>

<div class="abs" style="left:0;top:0;z-index:20">
<div class="abs" style="left:1873px;top:609px;width:47px;height:43px;background:#dce6fb;border-radius:8px 0 0 8px"></div>
<svg class="abs" style="left:1887px;top:613px" width="20" height="18.5" viewBox="0 0 24 22" fill="none"><path d="M12 3l8 4-8 4-8-4z" stroke="#2a6fd6" stroke-width="2" stroke-linejoin="round"/><path d="M4 11.500l8 4 8-4M4 15.500l8 4 8-4" stroke="#2a6fd6" stroke-width="2" stroke-linejoin="round" stroke-linecap="round"/></svg>
<div class="abs" style="left:1880px;top:635px;font-size:12px;line-height:16px;color:#2a6fd6;white-space:nowrap;width:36px;text-align:center">任务</div>
<div class="abs" style="left:1891px;top:752px;width:29px;height:102px;background:#0e60f0;border-radius:4px 0 0 4px;color:#fff;font-size:11px;line-height:16.600px;text-align:center;font-weight:700;padding-top:34px">联<br>系<br>客<br>服</div>
<svg class="abs" style="left:1897px;top:760px" width="18" height="18" viewBox="0 0 18 18" fill="none"><circle cx="9" cy="9" r="7" stroke="#fff" stroke-width="1.400"/><circle cx="6" cy="9" r=".800" fill="#fff"/><circle cx="9" cy="9" r=".800" fill="#fff"/><circle cx="12" cy="9" r=".800" fill="#fff"/></svg>
</div>
</div>
</body></html>
